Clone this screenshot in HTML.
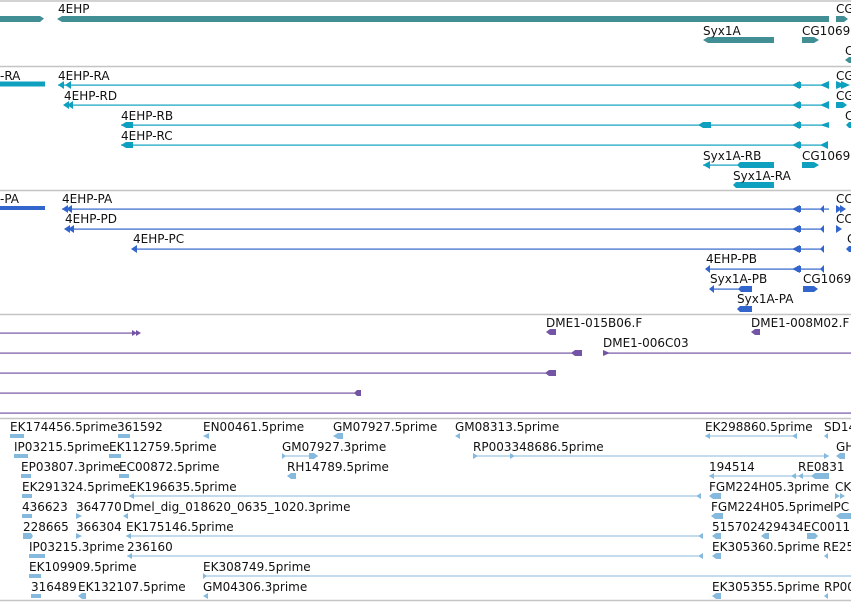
<!DOCTYPE html>
<html><head><meta charset="utf-8"><style>
html,body{margin:0;padding:0;background:#fff;overflow:hidden}
svg text{font-family:"DejaVu Sans","Liberation Sans",sans-serif;font-size:12px;fill:#111}
</style></head><body>
<svg width="851" height="602" viewBox="0 0 851 602" xmlns="http://www.w3.org/2000/svg">
<g stroke="#c4c4c4" stroke-width="1.5">
<line x1="0" y1="1" x2="851" y2="1"/><line x1="0" y1="66.5" x2="851" y2="66.5"/>
<line x1="0" y1="190.5" x2="851" y2="190.5"/><line x1="0" y1="314.5" x2="851" y2="314.5"/>
<line x1="0" y1="418.5" x2="851" y2="418.5"/><line x1="0" y1="600.5" x2="851" y2="600.5"/>
</g>
<!-- gene track -->
<g fill="#418f94">
<polygon points="0,16 40,16 44,18.5 40,22 0,22"/>
<polygon points="62,16 829,16 829,22 62,22 57,19"/>
<polygon points="836,16 844,16 848,19 844,22 836,22"/>
<polygon points="708,37 774,37 774,43 708,43 703,40"/>
<polygon points="802,37 814,37 819,40 814,43 802,43"/>
<polygon points="851,57 849,57 845,60 849,63 851,63"/>
</g>
<text x="58" y="13">4EHP</text><text x="836" y="13">CG</text>
<text x="703" y="35">Syx1A</text><text x="802" y="35">CG1069</text><text x="845" y="55">C</text>
<!-- transcripts -->
<g fill="#0fa0bf" stroke="none">
<rect x="0" y="81.5" width="45" height="5"/>
<rect x="58" y="84.5" width="771" height="1.2"/><polygon points="58,85 64,81 64,89"/><polygon points="65,85 71,81 71,89"/>
<polygon points="792,85 800,81 800,89"/><rect x="797" y="82" width="4" height="6"/><polygon points="820,85 829,81 829,89"/>
<polygon points="836,81 846,85 836,89"/><polygon points="841,81 850,85 841,89"/>
<rect x="64" y="104.5" width="765" height="1.2"/><polygon points="63,105 69,101 69,109"/><polygon points="67,105 73,101 73,109"/>
<polygon points="792,105 800,101 800,109"/><rect x="797" y="102" width="4" height="6"/><polygon points="820,105 829,101 829,109"/>
<polygon points="836,102 843,102 847,105 843,108 836,108"/>
<rect x="121" y="124.5" width="708" height="1.2"/><polygon points="121,125 126,122 133,122 133,128 126,128"/>
<polygon points="698,125 703,122 711,122 711,128 703,128"/><polygon points="792,125 800,121 800,129"/><rect x="797" y="122" width="4" height="6"/><polygon points="820,125 829,122 829,128"/>
<polygon points="851,122 849,122 846,125 849,128 851,128"/>
<rect x="121" y="144.5" width="707" height="1.2"/><polygon points="121,145 126,142 133,142 133,148 126,148"/>
<polygon points="792,145 800,141 800,149"/><rect x="797" y="142" width="4" height="6"/><polygon points="820,145 828,141 828,149"/>
<rect x="703" y="164.5" width="40" height="1.2"/><polygon points="703,165 710,161 710,169"/><polygon points="740,162 774,162 774,168 740,168 737,165"/>
<polygon points="802,162 814,162 819,165 814,168 802,168"/>
<polygon points="736,182 774,182 774,188 736,188 733,185"/>
</g>
<g fill="#0fa0bf"><rect x="0" y="82" width="45" height="4"/></g>
<text x="0" y="80">-RA</text><text x="58" y="80">4EHP-RA</text><text x="836" y="80">CG</text>
<text x="64" y="100">4EHP-RD</text><text x="836" y="100">CG</text>
<text x="121" y="120">4EHP-RB</text><text x="845" y="120">C</text>
<text x="121" y="140">4EHP-RC</text>
<text x="703" y="160">Syx1A-RB</text><text x="802" y="160">CG1069</text>
<text x="733" y="180">Syx1A-RA</text>
<!-- proteins -->
<g fill="#3366cc">
<rect x="0" y="206" width="45" height="4"/>
<rect x="62" y="208.5" width="767" height="1.2"/><polygon points="62,209 68,205 68,213"/><polygon points="66,209 72,205 72,213"/>
<polygon points="792,209 800,205 800,213"/><rect x="797" y="206" width="4" height="6"/><polygon points="820,209 824,205 824,213"/>
<polygon points="836,205 842,209 836,213"/><polygon points="840,205 846,209 840,213"/>
<rect x="65" y="228.5" width="759" height="1.2"/><polygon points="64,229 70,225 70,233"/><polygon points="68,229 74,225 74,233"/>
<polygon points="792,229 800,225 800,233"/><rect x="797" y="226" width="4" height="6"/><polygon points="820,229 824,225 824,233"/>
<polygon points="836,225 842,229 836,233"/>
<rect x="133" y="248.5" width="691" height="1.2"/><polygon points="131,249 137,245 137,253"/>
<polygon points="792,249 800,245 800,253"/><rect x="797" y="246" width="4" height="6"/><polygon points="820,249 824,245 824,253"/>
<polygon points="851,246 849,246 846,249 849,252 851,252"/>
<rect x="706" y="268.5" width="118" height="1.2"/><polygon points="705,269 710,265 710,273"/>
<polygon points="792,269 800,265 800,273"/><rect x="797" y="266" width="4" height="6"/><polygon points="820,269 824,265 824,273"/>
<rect x="710" y="288.5" width="30" height="1.2"/><polygon points="709,289 714,285 714,293"/><polygon points="741,286 752,286 752,292 741,292 738,289"/>
<polygon points="803,286 814,286 818,289 814,292 803,292"/>
<polygon points="740,306 752,306 752,312 740,312 737,309"/>
</g>
<text x="0" y="203">-PA</text><text x="62" y="203">4EHP-PA</text><text x="836" y="203">CC</text>
<text x="65" y="223">4EHP-PD</text><text x="836" y="223">CC</text>
<text x="133" y="243">4EHP-PC</text><text x="847" y="243">C</text>
<text x="706" y="263">4EHP-PB</text>
<text x="710" y="283">Syx1A-PB</text><text x="803" y="283">CG1069</text>
<text x="737" y="303">Syx1A-PA</text>
<!-- purple -->
<g fill="#7455a5">
<rect x="0" y="332.5" width="134" height="1.2"/><polygon points="132,330 137,333 132,336"/><polygon points="136,330 141,333 136,336"/>
<polygon points="546,332 550,329 556,329 556,335 550,335"/>
<polygon points="751,332 755,329 760,329 760,335 755,335"/>
<rect x="0" y="352.5" width="582" height="1.2"/><polygon points="571,353 575,350 582,350 582,356 575,356"/>
<polygon points="603,350 610,353 603,356"/><rect x="603" y="352.5" width="248" height="1.2"/>
<rect x="0" y="372.5" width="556" height="1.2"/><polygon points="545,373 549,370 556,370 556,376 549,376"/>
<rect x="0" y="392.5" width="361" height="1.2"/><polygon points="354,393 357,390 361,390 361,396 357,396"/>
<rect x="0" y="412.5" width="851" height="1.2"/>
</g>
<text x="546" y="327">DME1-015B06.F</text><text x="751" y="327">DME1-008M02.F</text>
<text x="603" y="347">DME1-006C03</text>
<!-- ESTs -->
<g fill="#85b9dd">
<rect x="10" y="434" width="14" height="4"/><rect x="118" y="434" width="12" height="4"/><polygon points="203,436 209,433 209,439"/><polygon points="333,436 338,433 343,433 343,439 338,439"/><polygon points="455,436 460,433 460,439"/>
<rect x="705" y="435.5" width="92" height="1"/><polygon points="705,436 710,433 710,439"/><polygon points="792,436 797,433 797,439"/><polygon points="824,436 828,433 828,439"/>
<rect x="14" y="454" width="14" height="4"/><rect x="109" y="454" width="12" height="4"/>
<rect x="282" y="455.5" width="36" height="1"/><polygon points="282,453 286,456 282,459"/><polygon points="309,453 314,453 318,456 314,459 309,459"/>
<rect x="473" y="455.5" width="356" height="1"/><polygon points="473,453 478,456 473,459"/><polygon points="510,453 515,456 510,459"/><polygon points="824,453 829,456 824,459"/><polygon points="836,456 840,453 845,453 845,459 840,459"/>
<rect x="21" y="474" width="10" height="4"/><rect x="119" y="474" width="10" height="4"/><polygon points="287,476 291,473 296,473 296,479 291,479"/>
<rect x="709" y="475.5" width="111" height="1"/><polygon points="709,476 714,473 714,479"/><polygon points="791,476 796,473 796,479"/><polygon points="798,476 803,473 803,479"/><polygon points="811,476 815,473 829,473 829,479 815,479"/>
<rect x="22" y="494" width="10" height="4"/><rect x="129" y="495.5" width="572" height="1"/><polygon points="129,496 134,493 134,499"/><polygon points="696,496 701,493 701,499"/>
<polygon points="709,496 713,493 721,493 721,499 713,499"/><polygon points="835,493 840,496 835,499"/><polygon points="840,493 845,496 840,499"/>
<rect x="22" y="514" width="10" height="4"/><polygon points="76,513 82,516 76,519"/><polygon points="123,516 128,513 128,519"/>
<polygon points="711,516 715,513 723,513 723,519 715,519"/><polygon points="836,516 840,513 851,513 851,519 840,519"/>
<polygon points="23,533 31,533 33,536 31,539 23,539"/><polygon points="76,533 82,536 76,539"/>
<rect x="126" y="535.5" width="577" height="1"/><polygon points="126,536 131,533 131,539"/><polygon points="698,536 703,533 703,539"/>
<polygon points="712,536 716,533 721,533 721,539 716,539"/><polygon points="761,536 765,533 769,533 769,539 765,539"/><polygon points="807,533 815,533 818,536 815,539 807,539"/>
<rect x="29" y="554" width="16" height="4"/><rect x="127" y="555.5" width="576" height="1"/><polygon points="127,556 132,553 132,559"/><polygon points="698,556 703,553 703,559"/>
<polygon points="712,556 716,553 721,553 721,559 716,559"/><polygon points="824,556 828,553 828,559"/>
<rect x="29" y="574" width="12" height="4"/><rect x="203" y="575.5" width="648" height="1"/><polygon points="203,573 207,576 203,579"/>
<rect x="31" y="594" width="10" height="4"/><polygon points="78,596 82,593 86,593 86,599 82,599"/><polygon points="203,596 208,593 208,599"/>
<polygon points="712,596 716,593 721,593 721,599 716,599"/><polygon points="824,596 828,593 828,599"/>
</g>
<text x="10" y="431">EK174456.5prime</text><text x="117" y="431">361592</text><text x="203" y="431">EN00461.5prime</text><text x="333" y="431">GM07927.5prime</text><text x="455" y="431">GM08313.5prime</text><text x="705" y="431">EK298860.5prime</text><text x="824" y="431">SD14</text>
<text x="14" y="451">IP03215.5prime</text><text x="109" y="451">EK112759.5prime</text><text x="282" y="451">GM07927.3prime</text><text x="473" y="451">RP003348686.5prime</text><text x="836" y="451">GH</text>
<text x="21" y="471">EP03807.3prime</text><text x="119" y="471">EC00872.5prime</text><text x="287" y="471">RH14789.5prime</text><text x="709" y="471">194514</text><text x="798" y="471">RE0831</text>
<text x="22" y="491">EK291324.5prime</text><text x="129" y="491">EK196635.5prime</text><text x="709" y="491">FGM224H05.3prime</text><text x="835" y="491">CK</text>
<text x="22" y="511">436623</text><text x="76" y="511">364770</text><text x="123" y="511">Dmel_dig_018620_0635_1020.3prime</text><text x="711" y="511">FGM224H05.5prime</text><text x="830" y="511">IPC</text>
<text x="23" y="531">228665</text><text x="76" y="531">366304</text><text x="126" y="531">EK175146.5prime</text><text x="712" y="531">515702429434EC0011</text>
<text x="29" y="551">IP03215.3prime</text><text x="127" y="551">236160</text><text x="712" y="551">EK305360.5prime</text><text x="823" y="551">RE25</text>
<text x="29" y="571">EK109909.5prime</text><text x="203" y="571">EK308749.5prime</text>
<text x="31" y="591">316489</text><text x="78" y="591">EK132107.5prime</text><text x="203" y="591">GM04306.3prime</text><text x="712" y="591">EK305355.5prime</text><text x="824" y="591">RP00</text>
</svg>
</body></html>
